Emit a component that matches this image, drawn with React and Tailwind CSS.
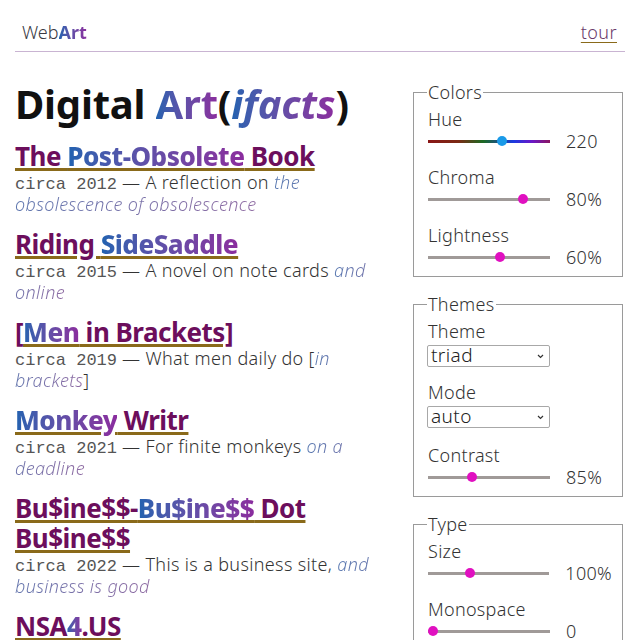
import React from "react";

const grad = "bg-gradient-to-r from-[#1f62b0] to-[#8a2c9e] bg-clip-text text-transparent";
const gradSoft = "bg-gradient-to-r from-[#5878b0] to-[#8e6aa2] bg-clip-text text-transparent";

const items = [
  {
    parts: [["The ", 0], ["Post-Obsolete", 1], [" Book", 0]],
    year: "2012",
    desc: "A reflection on ",
    em: "the obsolescence of obsolescence",
  },
  {
    parts: [["Riding ", 0], ["SideSaddle", 1]],
    year: "2015",
    desc: "A novel on note cards ",
    em: "and online",
  },
  {
    parts: [["[", 0], ["Men", 1], [" in Brackets]", 0]],
    year: "2019",
    desc: "What men daily do [",
    em: "in brackets",
    tail: "]",
  },
  {
    parts: [["Monkey", 1], [" Writr", 0]],
    year: "2021",
    desc: "For finite monkeys ",
    em: "on a deadline",
  },
  {
    parts: [["Bu$ine$$-", 0], ["Bu$ine$$", 1], [" Dot Bu$ine$$", 0]],
    year: "2022",
    desc: "This is a business site, ",
    em: "and business is good",
  },
  {
    parts: [["NSA", 0], ["4", 1], [".US", 0]],
    year: "2023",
    desc: "Secure by design ",
    em: "and by default",
  },
];

function Slider({ value, hue }) {
  return (
    <div className="relative w-[122px] h-[10px] flex items-center">
      <div
        className={
          "w-full h-[3px] " +
          (hue
            ? "bg-[linear-gradient(to_right,#8a1616,#7a2a14_25%,#1c6a22_45%,#1a3ae0_70%,#6a18c8_85%,#8a1660)]"
            : "bg-[#a09a98]")
        }
      />
      <div
        className={
          "absolute top-0 w-[10px] h-[10px] rounded-full " +
          (hue ? "bg-[#1a9ae8]" : "bg-[#e010c0]")
        }
        style={{ left: `calc(${value}% - 5px)` }}
      />
    </div>
  );
}

function SliderRow({ label, value, pos, hue }) {
  return (
    <div className="flex flex-col">
      <div className="h-[22px] leading-[22px]">{label}</div>
      <div className="flex items-center h-[22px]">
        <Slider value={pos} hue={hue} />
        <span className="ml-[16px]">{value}</span>
      </div>
    </div>
  );
}

function Select({ value }) {
  return (
    <div className="mt-[3px] -ml-[1px] w-[123px] h-[22px] border border-[#a8a8a8] rounded-[2px] flex items-center justify-between pl-[3px] pr-[5px] text-[19px] font-light leading-none text-[#222] tracking-[0.4px]">
      <span className="-mt-[2px]">{value}</span>
      <svg width="7" height="5" viewBox="0 0 7 5">
        <path d="M1 1 L3.5 3.5 L6 1" stroke="#333" strokeWidth="1.2" fill="none" />
      </svg>
    </div>
  );
}

function Box({ title, children }) {
  return (
    <fieldset className="border border-[#9a9a9a] pl-[14px] pr-[10px] pb-[8px] pt-0 m-0 min-w-0">
      <legend className="px-[1px] leading-[20px] -ml-[1px]">{title}</legend>
      <div className="flex flex-col gap-[14px] mt-[6px]">{children}</div>
    </fieldset>
  );
}

export default function App() {
  return (
    <div
      className="bg-white text-[#222] w-[640px] h-[640px] overflow-hidden font-light"
      style={{ fontFamily: '"Noto Sans", "Open Sans", sans-serif' }}
    >
      <header className="mx-[15px] h-[52px] border-b border-[#c9b4d2] flex items-center justify-between pl-[7px] pr-[8px] pt-[14px]">
        <div className="text-[18px] text-[#3a3a44]">
          Web<span className={"font-bold " + grad}>Art</span>
        </div>
        <a className="text-[18px] text-[#6a3a6a] underline decoration-[#8a6a1a] decoration-1 underline-offset-[3px] tracking-[0.4px]">
          tour
        </a>
      </header>
      <div className="flex pl-[15px]">
        <main className="w-[382px] shrink-0">
          <h1 className="mt-[30px] text-[40px] leading-[44px] font-bold text-[#111] tracking-[-0.2px]">
            Digital <span className={grad}>Art</span>(
            <span className={"italic " + grad}>ifacts</span>)
          </h1>
          <div className="mt-[15px] flex flex-col gap-[14px]">
            {items.map((it, i) => (
              <div key={i}>
                <h2 className="text-[26px] leading-[30px] font-bold tracking-[-0.5px]">
                  <a className="text-[#6c0e5c] underline decoration-[#8a6a1a] decoration-[3px] underline-offset-[2px]">
                    {it.parts.map(([t, g], j) =>
                      g ? (
                        <span key={j} className={"font-extrabold " + grad}>
                          {t}
                        </span>
                      ) : (
                        <span key={j}>{t}</span>
                      )
                    )}
                  </a>
                </h2>
                <p className="text-[18px] leading-[22px] text-[#333] tracking-[0.35px]">
                  <span
                    style={{ fontFamily: '"Liberation Mono", monospace' }}
                    className="text-[17px] leading-none font-normal tracking-normal text-[#555]"
                  >
                    circa {it.year}
                  </span>{" "}
                  — {it.desc}
                  <em className={"leading-none " + gradSoft}>{it.em}</em>
                  {it.tail}
                </p>
              </div>
            ))}
          </div>
        </main>
        <aside className="w-[210px] shrink-0 ml-[16px] flex flex-col gap-[17px] pt-[30px] text-[18px] tracking-[0.3px] text-[#333]">
          <Box title="Colors">
            <SliderRow label="Hue" value="220" pos={61} hue />
            <SliderRow label="Chroma" value="80%" pos={78} />
            <SliderRow label="Lightness" value="60%" pos={59} />
          </Box>
          <Box title="Themes">
            <div>
              <div className="h-[22px] leading-[22px]">Theme</div>
              <Select value="triad" />
            </div>
            <div>
              <div className="h-[22px] leading-[22px]">Mode</div>
              <Select value="auto" />
            </div>
            <div className="mt-[2px]">
              <SliderRow label="Contrast" value="85%" pos={36} />
            </div>
          </Box>
          <Box title="Type">
            <SliderRow label="Size" value="100%" pos={35} />
            <SliderRow label="Monospace" value="0" pos={4} />
          </Box>
        </aside>
      </div>
    </div>
  );
}
